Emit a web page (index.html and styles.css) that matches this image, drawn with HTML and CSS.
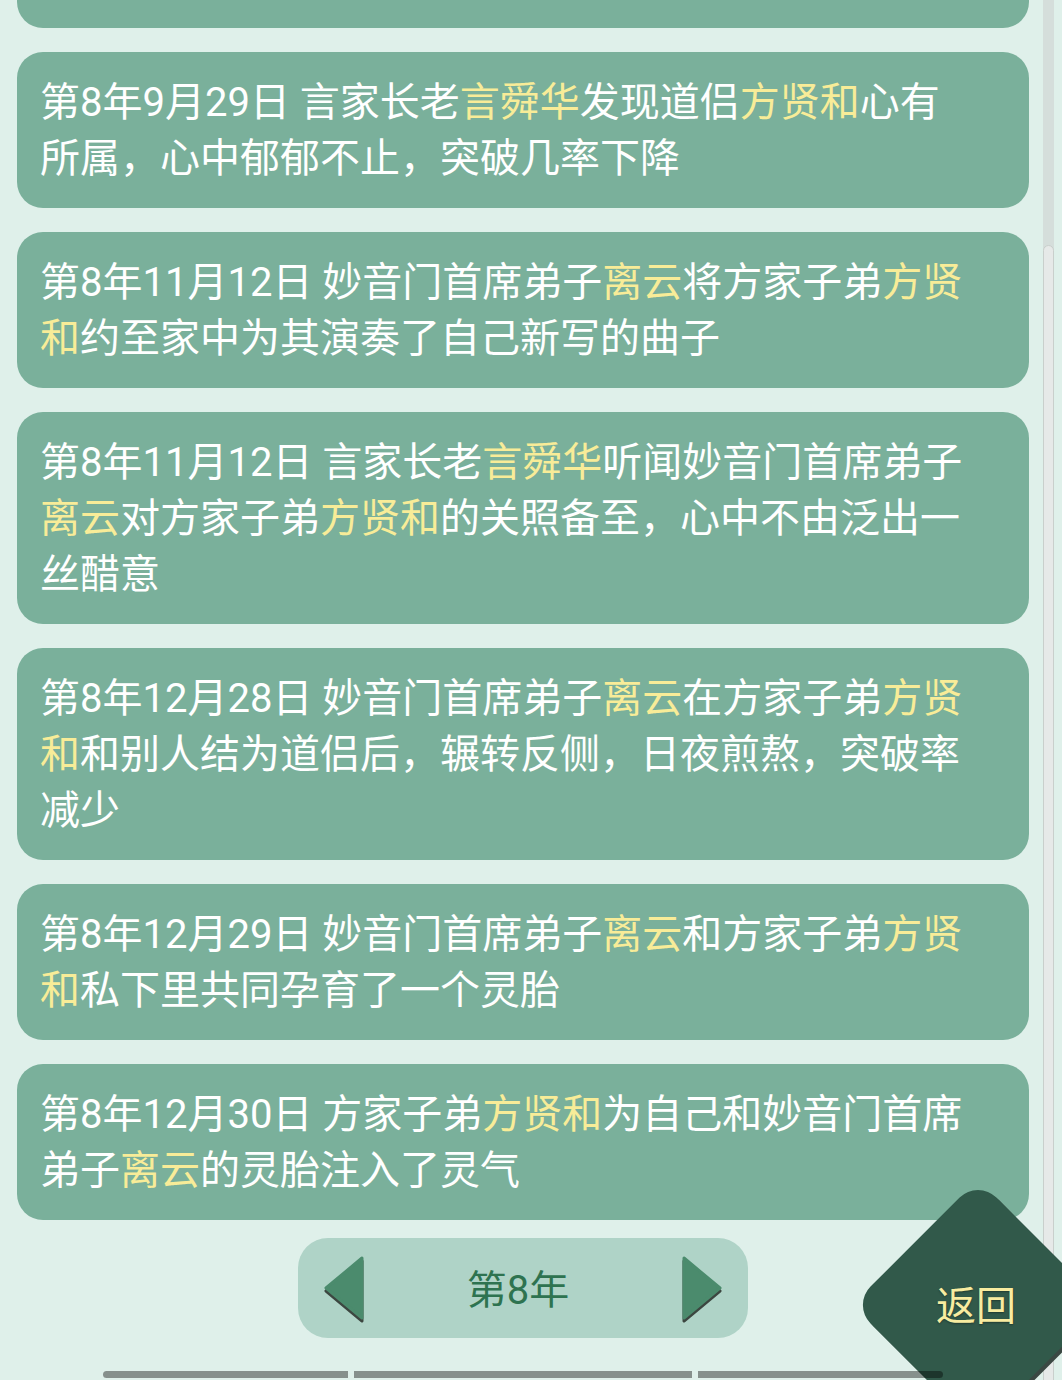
FILE: index.html
```html
<!DOCTYPE html>
<html lang="zh-CN">
<head>
    <meta charset="UTF-8">
    <meta name="viewport" content="width=device-width, initial-scale=1.0">
    <title>事件记录</title>
    <link rel="stylesheet" href="styles.css">
</head>
<body>

<div class="page">
    <div class="log">
        <div class="log-list">
            <div class="card card-hidden"></div>
            <div class="card">第8年9月29日 言家长老<span class="name">言舜华</span>发现道侣<span class="name">方贤和</span>心有所属，心中郁郁不止，突破几率下降</div>
            <div class="card">第8年11月12日 妙音门首席弟子<span class="name">离云</span>将方家子弟<span class="name">方贤和</span>约至家中为其演奏了自己新写的曲子</div>
            <div class="card">第8年11月12日 言家长老<span class="name">言舜华</span>听闻妙音门首席弟子<span class="name">离云</span>对方家子弟<span class="name">方贤和</span>的关照备至，心中不由泛出一丝醋意</div>
            <div class="card">第8年12月28日 妙音门首席弟子<span class="name">离云</span>在方家子弟<span class="name">方贤和</span>和别人结为道侣后，辗转反侧，日夜煎熬，突破率减少</div>
            <div class="card">第8年12月29日 妙音门首席弟子<span class="name">离云</span>和方家子弟<span class="name">方贤和</span>私下里共同孕育了一个灵胎</div>
            <div class="card">第8年12月30日 方家子弟<span class="name">方贤和</span>为自己和妙音门首席弟子<span class="name">离云</span>的灵胎注入了灵气</div>
        </div>
    </div>

    <div class="pager-row">
        <div class="pager">
            <button class="arrow" aria-label="上一年">
                <svg width="40" height="68" viewBox="0 0 40 68">
                    <polygon points="38,5 2,35 38,65" fill="#3c4640" stroke="#3c4640" stroke-width="3" stroke-linejoin="round"/>
                    <polygon points="38,2 2,32 38,62" fill="#4b8b6d" stroke="#4b8b6d" stroke-width="3" stroke-linejoin="round"/>
                </svg>
            </button>
            <span class="year">第8年</span>
            <button class="arrow" aria-label="下一年">
                <svg width="40" height="68" viewBox="0 0 40 68">
                    <polygon points="2,5 38,35 2,65" fill="#3c4640" stroke="#3c4640" stroke-width="3" stroke-linejoin="round"/>
                    <polygon points="2,2 38,32 2,62" fill="#4b8b6d" stroke="#4b8b6d" stroke-width="3" stroke-linejoin="round"/>
                </svg>
            </button>
        </div>
    </div>

    <div class="dock">
        <span class="dock-bar bar-short"></span>
        <span class="dock-bar bar-long"></span>
        <span class="dock-bar bar-short"></span>
    </div>

    <div class="scrollbar"><div class="scroll-thumb"></div></div>

    <button class="back-btn">返回</button>
</div>

</body>
</html>
```

FILE: styles.css
```css
body {
    margin: 0;
    background-color: #dff0ea;
    font-family: Roboto, "Noto Sans CJK SC", sans-serif;
}
.page {
    position: relative;
    width: 1062px;
    height: 1380px;
    overflow: hidden;
    display: flex;
    flex-direction: column;
}
.log {
    height: 1222px;
    overflow: hidden;
    padding: 0 33px 0 17px;
    flex-shrink: 0;
}
.log-list {
    margin-top: -128px;
    display: flex;
    flex-direction: column;
    gap: 24px;
}
.card {
    background-color: #7ab09b;
    border-radius: 26px;
    padding: 23px 60px 21px 23px;
    color: #ffffff;
    font-size: 40px;
    line-height: 56px;
}
.card-hidden {
    height: 112px;
}
.name {
    color: #f8ec98;
}
.pager-row {
    display: flex;
    justify-content: center;
    padding: 0 33px 0 17px;
    margin-top: 16px;
}
.pager {
    width: 450px;
    height: 100px;
    box-sizing: border-box;
    padding: 0 26px;
    background-color: #afd3c7;
    border-radius: 30px;
    display: flex;
    align-items: center;
}
.arrow {
    background: none;
    border: none;
    padding: 0;
    width: 40px;
    height: 68px;
    margin-top: 4px;
    cursor: pointer;
}
.arrow svg {
    display: block;
}
.year {
    flex: 1;
    text-align: center;
    font-size: 40px;
    color: #2e7350;
    padding-right: 10px;
    margin-top: -2px;
}
.dock {
    position: relative;
    z-index: 2;
    display: flex;
    justify-content: center;
    gap: 6px;
    padding: 0 33px 0 17px;
    margin-top: 33px;
}
.dock-bar {
    height: 7px;
    background-color: rgba(0, 0, 0, 0.4);
}
.bar-short {
    width: 245px;
}
.bar-long {
    width: 338px;
}
.dock-bar:first-child {
    border-radius: 4px 0 0 4px;
}
.dock-bar:last-child {
    border-radius: 0 4px 4px 0;
}
.scrollbar {
    position: absolute;
    top: 0;
    bottom: 0;
    right: 8px;
    width: 11px;
    background-color: #d5dedb;
}
.scroll-thumb {
    margin-top: 245px;
    height: 1200px;
    box-sizing: border-box;
    background-color: #e6e9e8;
    border: 1px solid #c9cfcc;
    border-radius: 6px 6px 0 0;
}
.back-btn {
    position: absolute;
    left: 889px;
    top: 1216px;
    width: 178px;
    height: 178px;
    z-index: 1;
    border: none;
    background: none;
    padding: 0 4px 4px 0;
    font-family: inherit;
    font-size: 40px;
    color: #f8eca0;
    text-shadow: 0 1px 2px rgba(0, 0, 0, 0.35);
    cursor: pointer;
    display: flex;
    align-items: center;
    justify-content: center;
}
.back-btn::before {
    content: "";
    position: absolute;
    inset: 0;
    background-color: #31594a;
    border-radius: 26px;
    transform: rotate(45deg);
    box-shadow: 4px 0 0 #3b4843;
    z-index: -1;
}
```
